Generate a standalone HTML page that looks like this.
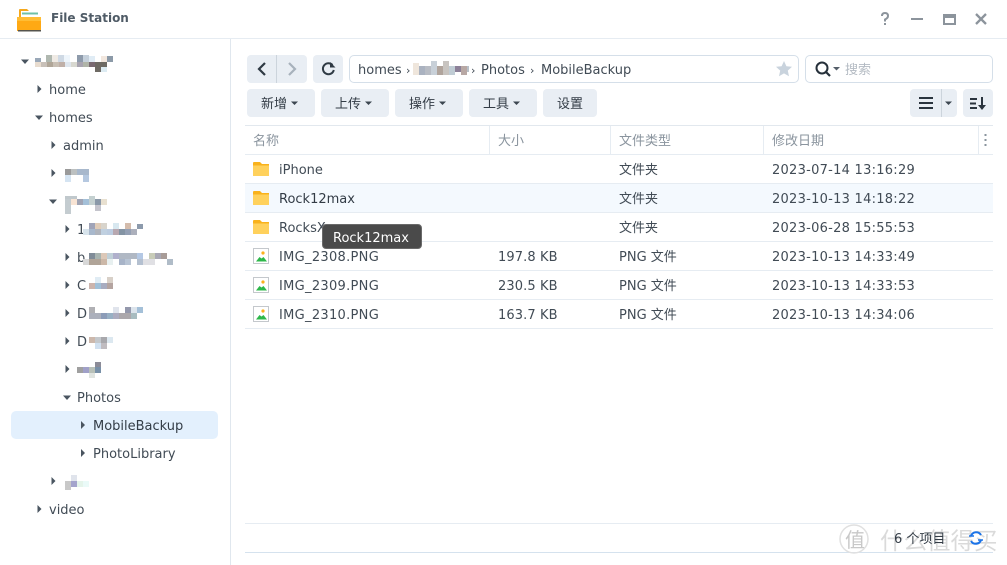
<!DOCTYPE html>
<html><head><meta charset="utf-8"><style>
html,body{margin:0;padding:0;background:#fff}
#a{position:relative;width:1007px;height:565px;overflow:hidden;background:#fff;font-family:"DejaVu Sans","Noto Sans CJK SC",sans-serif;font-size:13px;color:#414b55}
#a div,#a svg.p{position:absolute}
.t{white-space:nowrap;line-height:18px;height:18px;margin-top:2px}
.n{letter-spacing:.3px}
.d{letter-spacing:.26px}
.b{background:#e9eef4;border-radius:4px;height:28px;top:89px;line-height:32px;text-align:center;color:#333c46}
.l{background:#e6ecf2;height:1px}
.h{color:#8a949e;top:131px}
</style></head><body><div id="a">
<div class="l" style="left:0;top:38px;width:1007px"></div>
<div class="l" style="left:230px;top:39px;width:1px;height:526px;background:#e0e7ee"></div>
<svg class="p" style="left:17px;top:6px" width="25" height="26" viewBox="0 0 25 26"><path d="M2 4q0-1 1-1h7l2 2h9v8H2z" fill="#f5a81c"/><rect x="4" y="5" width="18" height="8" fill="#fff"/><rect x="5" y="6.500" width="16" height="2" fill="#6fc0a8"/><path d="M0 11h24v14H0z" fill="#ffa914"/><path d="M0 11h24v4H0z" fill="#ffbd35"/><rect x="1" y="24" width="23" height="1.500" fill="#55544e"/></svg>
<div class="t" style="left:51px;top:7px;font-weight:bold;font-size:12px;color:#4f5b66">File Station</div>
<svg class="p" style="left:875px;top:8px" width="120" height="22" viewBox="0 0 120 22" fill="none" stroke="#8c949c" stroke-width="2"><path d="M7 8q0-3 3-3t3 3q0 2-3 3.500v2"/><path d="M10 15v2"/><path d="M36 11h12"/><path d="M69 7h11v9H69z"/><path d="M69 8.500h11" stroke-width="3"/><path d="M101 6l10 10M111 6l-10 10" stroke-width="2.300"/></svg>

<!-- sidebar -->
<div class="t" style="left:49px;top:80px">home</div>
<div class="t" style="left:49px;top:108px">homes</div>
<div class="t" style="left:63px;top:136px">admin</div>
<div class="t" style="left:77px;top:220px">1</div>
<div class="t" style="left:77px;top:248px">b</div>
<div class="t" style="left:77px;top:276px">C</div>
<div class="t" style="left:77px;top:304px">D</div>
<div class="t" style="left:77px;top:332px">D</div>
<div class="t" style="left:77px;top:388px">Photos</div>
<div style="left:11px;top:411px;width:207px;height:28px;background:#e3f0fd;border-radius:5px"></div>
<div class="t" style="left:93px;top:416px;color:#333c46">MobileBackup</div>
<div class="t" style="left:93px;top:444px">PhotoLibrary</div>
<div class="t" style="left:49px;top:500px">video</div>
<svg class="p" style="left:0;top:0" width="230" height="565" fill="#4a5560">
<path d="M21 59.500h8l-4 4.500zM35 115.500h8l-4 4.500zM49 199.500h8l-4 4.500zM63 395.500h8l-4 4.500z"/>
<path d="M37.500 85v8l4-4zM51.500 141v8l4-4zM51.500 169v8l4-4zM65.500 225v8l4-4zM65.500 253v8l4-4zM65.500 281v8l4-4zM65.500 309v8l4-4zM65.500 337v8l4-4zM65.500 365v8l4-4zM81 421v8l4-4zM81 449v8l4-4zM51.500 477v8l4-4zM37.500 505v8l4-4z"/>
<g id="m">
<path fill="#9aa8b8" d="M35 58h6v4h-6z"/><path fill="#b0b8b0" d="M46 55h6v7h-6z"/><path fill="#efeae4" d="M52 55h6v7h-6z"/><path fill="#cfd9e4" d="M58 55h6v7h-6z"/><path fill="#eef5fb" d="M64 55h6v7h-6z"/><path fill="#8e9bab" d="M77 55h6v7h-6z"/><path fill="#c5d0db" d="M83 55h6v7h-6z"/><path fill="#e0ecf5" d="M89 56h6v6h-6z"/><path fill="#f2e7de" d="M101 56h6v6h-6z"/><path fill="#8c9aa8" d="M107 56h6v6h-6z"/>
<path fill="#e8dccf" d="M35 62h6v5h-6z"/><path fill="#c8c0b8" d="M41 62h6v5h-6z"/><path fill="#b0a698" d="M47 62h6v5h-6z"/><path fill="#c8bfb4" d="M53 62h6v5h-6z"/><path fill="#c0b0a8" d="M59 62h6v5h-6z"/><path fill="#dfe6ee" d="M65 62h6v5h-6z"/><path fill="#d8d8d0" d="M71 62h6v5h-6z"/><path fill="#a8a4b0" d="M77 62h6v5h-6z"/><path fill="#b0b4a8" d="M83 62h6v5h-6z"/><path fill="#7a6a72" d="M89 62h6v5h-6z"/><path fill="#6e6a64" d="M95 62h12v5H95z"/><path fill="#6e6a64" d="M95 67h6v5h-6z"/><path fill="#dcebf2" d="M101 67h6v5h-6z"/>
<path fill="#9a9a9a" d="M65 169h6v6h-6z"/><path fill="#bcc0c0" d="M71 169h6v6h-6z"/><path fill="#a8b8cc" d="M77 169h12v6H77z"/><path fill="#d5e4f2" d="M65 175h6v7h-6z"/><path fill="#b5c8e0" d="M83 175h6v7h-6z"/>
<path fill="#c0c8cc" d="M65 196h12v3H65z"/><path fill="#c4ccd0" d="M65 199h6v15h-6z"/><path fill="#f8e4d4" d="M71 199h6v6h-6z"/><path fill="#a0a4b4" d="M77 199h6v6h-6z"/><path fill="#a4c0d8" d="M83 199h6v6h-6z"/><path fill="#c4d0d0" d="M89 196h6v9h-6z"/><path fill="#8a98a8" d="M95 199h6v6h-6z"/><path fill="#e8e0d0" d="M101 199h6v6h-6z"/><path fill="#c4c4cc" d="M95 205h6v6h-6z"/>
<path fill="#a0a4b8" d="M89 223h6v6h-6z"/><path fill="#e0ccb8" d="M95 223h6v6h-6z"/><path fill="#d8d4cc" d="M101 223h6v6h-6z"/><path fill="#d8e8f0" d="M113 223h6v6h-6z"/><path fill="#d4bcac" d="M125 223h6v6h-6z"/><path fill="#8c9aac" d="M137 224h6v5h-6z"/><path fill="#d8e4ec" d="M83 229h6v6h-6z"/><path fill="#a8b8cc" d="M89 229h6v6h-6z"/><path fill="#b0b4bc" d="M95 229h6v6h-6z"/><path fill="#c0d0e0" d="M101 229h6v6h-6z"/><path fill="#bccce0" d="M107 229h6v6h-6z"/><path fill="#b8a8b0" d="M113 229h6v6h-6z"/><path fill="#8494a4" d="M119 229h6v6h-6z"/><path fill="#94a0b4" d="M125 229h6v6h-6z"/><path fill="#acb0bc" d="M131 229h6v6h-6z"/>
<path fill="#808c98" d="M89 253h6v6h-6z"/><path fill="#a8b4b0" d="M95 253h6v6h-6z"/><path fill="#dcc8b8" d="M101 253h6v6h-6z"/><path fill="#c0d0d8" d="M107 253h6v6h-6z"/><path fill="#b0b0cc" d="M113 253h6v6h-6z"/><path fill="#b0b8c4" d="M119 253h18v6h-18z"/><path fill="#b4c8e4" d="M137 253h6v6h-6z"/><path fill="#c8ccb8" d="M149 253h6v6h-6z"/><path fill="#a8a8b4" d="M155 253h6v6h-6z"/><path fill="#a89c98" d="M161 253h6v6h-6z"/><path fill="#d8d8d8" d="M83 259h6v6h-6z"/><path fill="#b0a498" d="M89 259h12v6H89z"/><path fill="#ccb8a8" d="M101 259h6v6h-6z"/><path fill="#e8f0f0" d="M107 259h6v6h-6z"/><path fill="#a8b4c8" d="M119 259h6v6h-6z"/><path fill="#b8c4d4" d="M125 259h6v6h-6z"/><path fill="#b4c0d0" d="M137 259h6v6h-6z"/><path fill="#e0e0e4" d="M143 259h12v6h-12z"/><path fill="#b0bcc8" d="M167 259h6v6h-6z"/>
<path fill="#e0ecf4" d="M95 277h6v6h-6z"/><path fill="#d8d0c8" d="M107 277h6v6h-6z"/><path fill="#ccb4ac" d="M89 283h6v6h-6z"/><path fill="#a0c0d8" d="M95 283h6v6h-6z"/><path fill="#a8acc0" d="M101 283h6v6h-6z"/><path fill="#b4a4a0" d="M107 283h6v6h-6z"/>
<path fill="#b0b0b4" d="M89 307h6v6h-6z"/><path fill="#e0e4ec" d="M113 307h6v6h-6z"/><path fill="#9498ac" d="M125 307h6v6h-6z"/><path fill="#dce4ec" d="M131 307h6v6h-6z"/><path fill="#a4c0d8" d="M137 307h6v6h-6z"/><path fill="#acb0bc" d="M89 313h12v6H89z"/><path fill="#8c9cb8" d="M101 313h6v6h-6z"/><path fill="#98b0c4" d="M107 313h6v6h-6z"/><path fill="#acacc0" d="M113 313h6v6h-6z"/><path fill="#aca8ac" d="M119 313h12v6h-12z"/><path fill="#a8bcc0" d="M131 313h6v6h-6z"/>
<path fill="#ccb8ac" d="M89 337h6v6h-6z"/><path fill="#c4c8cc" d="M95 337h6v6h-6z"/><path fill="#a8a8ac" d="M101 337h6v6h-6z"/><path fill="#dce8f0" d="M107 337h6v6h-6z"/><path fill="#d0e0f0" d="M95 343h6v6h-6z"/><path fill="#c0bcc0" d="M101 343h6v6h-6z"/>
<path fill="#a0a0a0" d="M77 367h6v6h-6z"/><path fill="#a0a0c8" d="M83 367h6v6h-6z"/><path fill="#b8c0b8" d="M89 367h6v6h-6z"/><path fill="#8c8c98" d="M95 362h6v5h-6z"/><path fill="#7890a8" d="M95 367h6v6h-6z"/><path fill="#e0e4e0" d="M89 373h6v5h-6z"/>
<path fill="#e0e4ec" d="M71 475h6v6h-6z"/><path fill="#c8c8c8" d="M65 481h6v9h-6z"/><path fill="#a4a4cc" d="M71 481h6v6h-6z"/><path fill="#e4f4ea" d="M77 481h6v6h-6z"/><path fill="#eafaf8" d="M83 481h6v6h-6z"/>
</g></svg>

<!-- nav -->
<div class="b" style="left:247px;top:55px;width:60px"></div>
<div style="left:276px;top:55px;width:1px;height:28px;background:#ccd4dc"></div>
<div class="b" style="left:313px;top:55px;width:30px"></div>
<svg class="p" style="left:247px;top:55px" width="100" height="28" fill="none"><path d="M18 8l-6 6 6 6" stroke="#2f3a44" stroke-width="2.200"/><path d="M42 8l6 6-6 6" stroke="#a8b2bc" stroke-width="2.200"/><path d="M85.500 10a5.500 5.500 0 1 0 1.300 5" stroke="#2f3a44" stroke-width="2"/><path d="M83 7v5.500h5.500z" fill="#2f3a44"/></svg>
<div style="left:349px;top:55px;width:448px;height:26px;border:1px solid #d5dfe9;border-radius:5px"></div>
<div class="t" style="left:358px;top:60px">homes</div>
<div class="t" style="left:406px;top:60px;font-size:11px">›</div>
<div class="t" style="left:471px;top:60px;font-size:11px">›</div>
<div class="t" style="left:481px;top:60px">Photos</div>
<div class="t" style="left:530px;top:60px;font-size:11px">›</div>
<div class="t" style="left:541px;top:60px">MobileBackup</div>
<svg class="p" style="left:349px;top:55px" width="130" height="28"><path fill="#efe6dc" d="M64 8h6v12h-6z"/><path fill="#aab2c0" d="M70 11h6v9h-6z"/><path fill="#b8bcc4" d="M76 11h6v9h-6z"/><path fill="#c8d0d8" d="M82 6h6v14h-6z"/><path fill="#b0a49c" d="M88 11h6v9h-6z"/><path fill="#c8c4c0" d="M94 6h6v14h-6z"/><path fill="#c0ccd4" d="M100 11h6v9h-6z"/><path fill="#8c8098" d="M106 11h6v6h-6z"/><path fill="#b8a8a4" d="M112 11h6v9h-6z"/><path fill="#b8c0c8" d="M118 11h2v6h-2z"/></svg>
<svg class="p" style="left:775px;top:60px" width="18" height="18"><path d="M9 1l2.400 5.200 5.600.600-4.200 3.800 1.200 5.600L9 13.400l-5 2.800 1.200-5.600L1 6.800l5.600-.600z" fill="#c9d3dd"/></svg>
<div style="left:805px;top:55px;width:186px;height:26px;border:1px solid #d5dfe9;border-radius:5px"></div>
<svg class="p" style="left:814px;top:60px" width="30" height="18" fill="none"><circle cx="8" cy="8" r="5.500" stroke="#26303a" stroke-width="2"/><path d="M12 12l4 4" stroke="#26303a" stroke-width="2.200"/><path d="M19 7h7l-3.500 3.500z" fill="#555f69"/></svg>
<div class="t" style="left:845px;top:60px;color:#b4bbc3">搜索</div>

<!-- toolbar -->
<div class="b" style="left:247px;width:68px;text-indent:-14px">新增</div>
<div class="b" style="left:321px;width:68px;text-indent:-14px">上传</div>
<div class="b" style="left:395px;width:68px;text-indent:-14px">操作</div>
<div class="b" style="left:469px;width:68px;text-indent:-14px">工具</div>
<div class="b" style="left:543px;width:54px">设置</div>
<div class="b" style="left:910px;width:47px"></div>
<div style="left:941px;top:89px;width:1px;height:28px;background:#ccd4dc"></div>
<div class="b" style="left:963px;width:30px"></div>
<svg class="p" style="left:240px;top:89px" width="760" height="28"><g fill="#3c4650"><path d="M51 12.500h7l-3.500 3.500zM125 12.500h7l-3.500 3.500zM199 12.500h7l-3.500 3.500zM273 12.500h7l-3.500 3.500zM705 12.500h7l-3.500 3.500z"/></g><g fill="#2a343e"><path d="M679 8h14v2h-14zM679 13h14v2h-14zM679 18h14v2h-14zM730 9h7v2h-7zM730 13.500h6v2h-6zM730 18h7v2h-7zM741 8h2v8h3l-4 5-4-5h3z"/></g></svg>

<!-- table -->
<div class="l" style="left:245px;top:125px;width:748px;background:#e2e8ee"></div>
<div class="l" style="left:245px;top:154px;width:748px"></div>
<div class="l" style="left:489px;top:126px;width:1px;height:28px"></div>
<div class="l" style="left:610px;top:126px;width:1px;height:28px"></div>
<div class="l" style="left:763px;top:126px;width:1px;height:28px"></div>
<div class="l" style="left:978px;top:126px;width:1px;height:28px"></div>
<div class="t h" style="left:253px">名称</div>
<div class="t h" style="left:498px">大小</div>
<div class="t h" style="left:619px">文件类型</div>
<div class="t h" style="left:772px">修改日期</div>
<svg class="p" style="left:983px;top:133px" width="6" height="14" fill="#8a949e"><path d="M1.500 1h2v2h-2zM1.500 6h2v2h-2zM1.500 11h2v2h-2z"/></svg>
<div style="left:245px;top:184px;width:748px;height:28px;background:#f4f9fe"></div>
<div class="l" style="left:245px;top:183px;width:748px"></div>
<div class="l" style="left:245px;top:212px;width:748px"></div>
<div class="l" style="left:245px;top:241px;width:748px"></div>
<div class="l" style="left:245px;top:270px;width:748px"></div>
<div class="l" style="left:245px;top:299px;width:748px"></div>
<div class="l" style="left:245px;top:328px;width:748px"></div>
<svg class="p" style="left:245px;top:155px" width="30" height="175">
<defs><g id="f"><path d="M8 8q0-1 1-1h6l2 2h7v3H8z" fill="#f9b21c"/><path d="M8 10.500h16V21H8z" fill="#ffd15c"/></g>
<g id="g"><rect x="8.500" y="6.500" width="15" height="15" fill="#fff" stroke="#c4c8cc"/><path d="M11 19.500l3.500-4.500 2 1.500 2-1.500 3.500 4.500z" fill="#2db84a"/><circle cx="18" cy="11" r="1.600" fill="#fbb01c"/></g></defs>
<use href="#f" y="0"/><use href="#f" y="29"/><use href="#f" y="58"/><use href="#g" y="87"/><use href="#g" y="116"/><use href="#g" y="145"/></svg>
<div class="t" style="left:279px;top:160px">iPhone</div>
<div class="t" style="left:279px;top:189px;color:#333c46">Rock12max</div>
<div class="t" style="left:279px;top:218px">RocksX</div>
<div class="t n" style="left:279px;top:247px">IMG_2308.PNG</div>
<div class="t n" style="left:279px;top:276px">IMG_2309.PNG</div>
<div class="t n" style="left:279px;top:305px">IMG_2310.PNG</div>
<div class="t" style="left:498px;top:247px;letter-spacing:.1px">197.8 KB</div>
<div class="t" style="left:498px;top:276px;letter-spacing:.1px">230.5 KB</div>
<div class="t" style="left:498px;top:305px;letter-spacing:.1px">163.7 KB</div>
<div class="t" style="left:619px;top:160px">文件夹</div>
<div class="t" style="left:619px;top:189px">文件夹</div>
<div class="t" style="left:619px;top:218px">文件夹</div>
<div class="t" style="left:619px;top:247px">PNG 文件</div>
<div class="t" style="left:619px;top:276px">PNG 文件</div>
<div class="t" style="left:619px;top:305px">PNG 文件</div>
<div class="t d" style="left:772px;top:160px">2023-07-14 13:16:29</div>
<div class="t d" style="left:772px;top:189px">2023-10-13 14:18:22</div>
<div class="t d" style="left:772px;top:218px">2023-06-28 15:55:53</div>
<div class="t d" style="left:772px;top:247px">2023-10-13 14:33:49</div>
<div class="t d" style="left:772px;top:276px">2023-10-13 14:33:53</div>
<div class="t d" style="left:772px;top:305px">2023-10-13 14:34:06</div>
<div style="left:322px;top:224px;width:98px;height:23px;background:#4a4a4a;border:1px solid #6a6a6a;border-radius:4px"></div>
<div class="t" style="left:333px;top:228px;color:#fff">Rock12max</div>

<!-- footer -->
<div class="l" style="left:245px;top:523px;width:748px"></div>
<div class="l" style="left:245px;top:552px;width:748px;background:#d5e2ee"></div>
<div class="t" style="left:841px;top:525px;width:28px;height:25px;line-height:24px;text-align:center;font-size:20px;color:#c8c8c8;font-family:'Noto Sans CJK SC',sans-serif">值</div>
<svg class="p" style="left:838px;top:523px" width="34" height="32" fill="none"><circle cx="16" cy="16" r="14" stroke="#e0e0e0" stroke-width="1.500"/></svg>
<div class="t" style="left:880px;top:523px;height:28px;line-height:28px;font-size:23.500px;color:#dadada;font-family:'Noto Sans CJK SC',sans-serif">什么值得买</div>
<div class="t" style="left:894px;top:529px;color:#333c46">6 个项目</div>
<svg class="p" style="left:968px;top:530px" width="16" height="16" fill="none"><path d="M13 5a5.500 5.500 0 0 0-10 1M3 11a5.500 5.500 0 0 0 10-1" stroke="#1a73e8" stroke-width="2"/><path d="M1 6h5M10 10h5" stroke="#1a73e8" stroke-width="1.500"/></svg>
</div></body></html>
